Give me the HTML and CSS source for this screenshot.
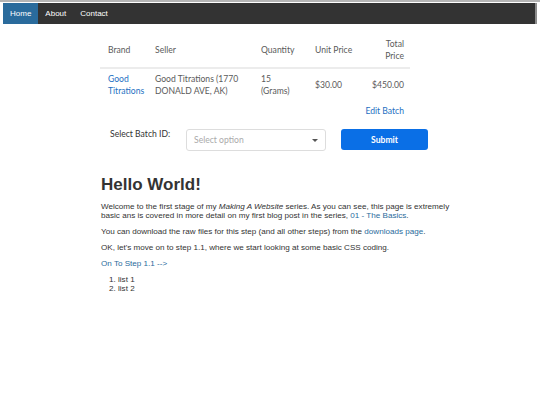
FILE: index.html
```html
<!DOCTYPE html>
<html>
<head>
<meta charset="utf-8">
<link rel="stylesheet" href="styles.css">
</head>
<body>
<div class="topline"></div>
<nav class="nav">
  <a class="tab active">Home</a>
  <a class="tab">About</a>
  <a class="tab">Contact</a>
</nav>
<main class="page">
  <table class="batch">
    <thead>
      <tr>
        <th class="c-brand">Brand</th>
        <th class="c-seller">Seller</th>
        <th class="c-qty">Quantity</th>
        <th class="c-unit">Unit Price</th>
        <th class="c-total">Total<br>Price</th>
      </tr>
    </thead>
    <tbody>
      <tr>
        <td class="c-brand link">Good<br>Titrations</td>
        <td class="c-seller">Good Titrations (1770<br>DONALD AVE, AK)</td>
        <td class="c-qty">15<br>(Grams)</td>
        <td class="c-unit">$30.00</td>
        <td class="c-total">$450.00</td>
      </tr>
    </tbody>
  </table>
  <div class="edit-row"><a class="edit">Edit Batch</a></div>
  <div class="select-row">
    <span class="label">Select Batch ID:</span>
    <div class="select"><span>Select option</span><span class="caret"></span></div>
    <button class="submit">Submit</button>
  </div>
  <section class="content">
    <h1>Hello World!</h1>
    <p>Welcome to the first stage of my <em>Making A Website</em> series. As you can see, this page is extremely basic ans is covered in more detail on my first blog post in the series, <a>01 - The Basics</a>.</p>
    <p>You can download the raw files for this step (and all other steps) from the <a>downloads page</a>.</p>
    <p>OK, let's move on to step 1.1, where we start looking at some basic CSS coding.</p>
    <p><a>On To Step 1.1 --&gt;</a></p>
    <ol>
      <li>list 1</li>
      <li>list 2</li>
    </ol>
  </section>
</main>
</body>
</html>
```
FILE: styles.css
```css
html, body { margin: 0; padding: 0; background: #fff; }
body { font-family: "Liberation Sans", Arial, sans-serif; }
.topline { height: 2px; background: #b5b5b5; }
.nav {
  display: flex;
  height: 21px;
  margin: 1px 3px 0 3px;
  background: #333;
  border-right: 2px solid #8c8c8c;
}
.tab {
  color: #fff;
  font-size: 8px;
  line-height: 21px;
  padding: 0 7px;
}
.active { background: #2a6b9c; }
.page { width: 350px; margin-left: 100px; }
.batch {
  width: 310px;
  border-collapse: collapse;
  font-family: Lato, "Open Sans", sans-serif;
  font-size: 8.6px;
  line-height: 12px;
  color: #5a5a5a;
  margin-top: 9px;
}
.batch th {
  font-weight: normal;
  text-align: left;
  padding: 4px 0 4px 8px;
  height: 26px;
  border-bottom: 2px solid #ececec;
}
.batch td {
  text-align: left;
  padding: 4px 0 4px 8px;
  height: 24px;
}
.c-brand { width: 39px; }
.c-seller { width: 98px; }
.c-qty { width: 46px; }
.c-unit { width: 47px; }
.batch .c-total { text-align: right; padding-right: 6px; }
.link { color: #1d6fc2; }
.edit-row {
  width: 304px;
  text-align: right;
  margin-top: 4px;
  font-family: Lato, "Open Sans", sans-serif;
  font-size: 8.6px;
  line-height: 12px;
}
.edit { color: #1d6fc2; }
.select-row {
  display: flex;
  align-items: flex-start;
  margin-top: 12px;
  font-family: Lato, "Open Sans", sans-serif;
}
.label {
  font-size: 8.6px;
  line-height: 12px;
  color: #333;
  margin: -1px 0 0 10px;
  width: 76px;
}
.select {
  box-sizing: border-box;
  width: 140px;
  height: 22px;
  border: 1px solid #ddd;
  border-radius: 3px;
  display: flex;
  align-items: center;
  justify-content: space-between;
  padding: 0 6px 0 7px;
  font-size: 8.6px;
  color: #aaa;
}
.caret {
  width: 0; height: 0;
  border-left: 3px solid transparent;
  border-right: 3px solid transparent;
  border-top: 3px solid #555;
  margin-right: 1px;
}
.submit {
  margin-left: 15px;
  width: 87px;
  height: 21px;
  border: none;
  border-radius: 3px;
  background: #0a6fe6;
  color: #fff;
  font-family: Lato, "Open Sans", sans-serif;
  font-weight: bold;
  font-size: 8.6px;
  padding: 0;
}
.content { color: #333; font-size: 8.1px; line-height: 9px; margin-top: 24px; }
.content h1 { font-size: 17px; line-height: 20px; margin: 0 0 7px 1px; color: #333; }
.content p { margin: 0 0 7px 1px; }
.content a { color: #2a6b9c; }
.content ol { margin: 0 0 0 1px; padding-left: 17px; }
```
